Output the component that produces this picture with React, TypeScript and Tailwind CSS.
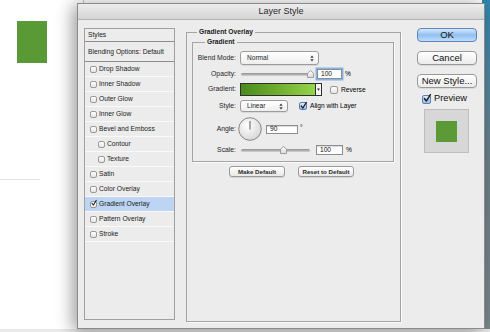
import React from "react"

const EFFECTS = [
  { label: "Drop Shadow" },
  { label: "Inner Shadow" },
  { label: "Outer Glow" },
  { label: "Inner Glow" },
  { label: "Bevel and Emboss" },
  { label: "Contour", sub: true },
  { label: "Texture", sub: true },
  { label: "Satin" },
  { label: "Color Overlay" },
  { label: "Gradient Overlay", on: true },
  { label: "Pattern Overlay" },
  { label: "Stroke" },
]

const CheckBox = ({
  on = false,
  blue = false,
  className = "w-[7px] h-[7px]",
}: {
  on?: boolean
  blue?: boolean
  className?: string
}) => (
  <span
    className={`relative block shrink-0 rounded-[2px] border ${
      blue
        ? "border-[#5b7fae] bg-gradient-to-b from-[#dce9fa] to-[#98bfec]"
        : "border-[#9a9a9a] bg-gradient-to-b from-white to-[#e4e4e4]"
    } ${className}`}
  >
    {on && (
      <svg
        viewBox="0 0 10 10"
        className="absolute -top-[25%] left-[5%] h-[120%] w-[120%] overflow-visible"
      >
        <path
          d="M1.6 5.4 L4 8.4 L8.8 0.6"
          fill="none"
          stroke="#1c1c1c"
          strokeWidth="1.7"
          strokeLinecap="round"
          strokeLinejoin="round"
        />
      </svg>
    )}
  </span>
)

const UpDown = () => (
  <svg width="4" height="7" viewBox="0 0 4 7" className="shrink-0">
    <path d="M0.3 2.8 L2 0.6 L3.7 2.8Z M0.3 4.2 L2 6.4 L3.7 4.2Z" fill="#3a3a3a" />
  </svg>
)

const Select = ({ value, className }: { value: string; className: string }) => (
  <div
    className={`flex h-full items-center justify-between rounded-[3px] border border-[#9c9c9c] bg-gradient-to-b from-white to-[#efefef] pl-[6px] pr-[4px] text-[6.6px] text-[#1d1d1d] shadow-[0_1px_0_rgba(0,0,0,0.08)] ${className}`}
  >
    <span>{value}</span>
    <UpDown />
  </div>
)

const Thumb = () => (
  <svg width="7" height="8" viewBox="0 0 7 8">
    <defs>
      <linearGradient id="th" x1="0" y1="0" x2="0" y2="1">
        <stop offset="0" stopColor="#ffffff" />
        <stop offset="1" stopColor="#d9d9d9" />
      </linearGradient>
    </defs>
    <path d="M0.5 3.2 L3.5 0.5 L6.5 3.2 V7.5 H0.5 Z" fill="url(#th)" stroke="#8a8a8a" strokeWidth="0.8" />
  </svg>
)

const Field = ({ value, className, focus = false }: { value: string; className: string; focus?: boolean }) => (
  <div
    className={`flex items-center border border-[#8d8d8d] bg-white pl-[3px] text-[6.6px] text-[#111] ${
      focus ? "shadow-[0_0_0_1.5px_#86b4ea]" : "shadow-[inset_0_1px_1px_rgba(0,0,0,0.15)]"
    } ${className}`}
  >
    {value}
  </div>
)

const Label = ({ children }: { children: React.ReactNode }) => (
  <span className="w-[44px] shrink-0 pr-[1px] text-right text-[6.8px] text-[#1e1e1e]">{children}</span>
)

const StylesList = () => (
  <div className="flex h-[292px] w-[91px] shrink-0 flex-col border border-[#a0a0a0] text-[6.7px] text-[#1b1b1b]">
    <div className="flex h-[13px] items-center border-b border-[#8e8e8e] pl-[3px]">Styles</div>
    <div className="flex h-[20px] items-center border-b border-[#8e8e8e] pl-[3px] pt-[2px]">
      Blending Options: Default
    </div>
    {EFFECTS.map((fx) => (
      <div
        key={fx.label}
        className={`flex h-[15px] items-center gap-[2px] border-b border-[#f9f9f9] ${
          fx.sub ? "pl-[13px]" : "pl-[5px]"
        } ${fx.on ? "bg-[#bdd5f3]" : ""}`}
      >
        <CheckBox on={fx.on} />
        <span>{fx.label}</span>
      </div>
    ))}
  </div>
)

const GradientOverlay = () => (
  <fieldset className="ml-[11px] h-[294px] w-[215px] shrink-0 border border-[#a4a4a4] shadow-[1px_1px_0_#fbfbfb]">
    <legend className="ml-[10px] px-[2px] text-[6.7px] font-bold leading-[8px] text-[#1a1a1a]">
      Gradient Overlay
    </legend>
    <fieldset className="ml-[5px] mt-[2px] h-[124px] w-[202px] border border-[#a4a4a4] shadow-[1px_1px_0_#fbfbfb]">
      <legend className="ml-[12px] px-[2px] text-[6.7px] font-bold leading-[8px] text-[#1a1a1a]">
        Gradient
      </legend>
      <div className="flex flex-col pt-[5px]">
        <div className="flex h-[14px] items-center">
          <Label>Blend Mode:</Label>
          <Select value="Normal" className="ml-[3px] w-[79px]" />
        </div>

        <div className="mt-[4px] flex h-[10px] items-center">
          <Label>Opacity:</Label>
          <div className="relative ml-[4px] flex h-full w-[71px] items-center">
            <div className="h-[3px] w-full rounded-full bg-gradient-to-b from-[#8f8f8f] to-[#d2d2d2]" />
            <div className="absolute left-[66px] top-[1px]">
              <Thumb />
            </div>
          </div>
          <Field value="100" focus className="ml-[5px] h-[10px] w-[25px]" />
          <span className="ml-[3px] text-[6.6px]">%</span>
        </div>

        <div className="mt-[4px] flex h-[13px] items-center">
          <Label>Gradient:</Label>
          <div className="ml-[3px] flex h-full w-[82px] border border-[#2f2f2f]">
            <div className="h-full flex-1 bg-gradient-to-r from-[#4a8a1e] via-[#6fae30] to-[#95d54a]" />
            <div className="flex h-full w-[6px] items-center justify-center border-l border-[#2f2f2f] bg-[#f3f3f3]">
              <svg width="3" height="3" viewBox="0 0 4 3">
                <path d="M0 0 H4 L2 3Z" fill="#333" />
              </svg>
            </div>
          </div>
          <CheckBox className="ml-[8px] h-[8px] w-[8px]" />
          <span className="ml-[3px] text-[6.6px]">Reverse</span>
        </div>

        <div className="mt-[4px] flex h-[12px] items-center">
          <Label>Style:</Label>
          <Select value="Linear" className="ml-[3px] w-[48px]" />
          <CheckBox on blue className="ml-[11px] h-[8px] w-[8px]" />
          <span className="ml-[3px] text-[6.6px]">Align with Layer</span>
        </div>

        <div className="mt-[5px] flex h-[24px] items-center">
          <Label>Angle:</Label>
          <svg width="24" height="24" viewBox="0 0 24 24" className="ml-[1px] shrink-0">
            <defs>
              <radialGradient id="dial" cx="40%" cy="35%" r="75%">
                <stop offset="0" stopColor="#ffffff" />
                <stop offset="1" stopColor="#d2d2d2" />
              </radialGradient>
            </defs>
            <circle cx="12" cy="12" r="11.3" fill="url(#dial)" stroke="#7a7a7a" strokeWidth="0.9" />
            <line x1="12" y1="12.5" x2="12" y2="4" stroke="#5a5a5a" strokeWidth="1" />
          </svg>
          <Field value="90" className="ml-[4px] h-[9px] w-[32px]" />
          <span className="ml-[2px] self-start pt-[6px] text-[6.6px]">°</span>
        </div>

        <div className="mt-[4px] flex h-[10px] items-center">
          <Label>Scale:</Label>
          <div className="relative ml-[4px] flex h-full w-[69px] items-center">
            <div className="h-[3px] w-full rounded-full bg-gradient-to-b from-[#8f8f8f] to-[#d2d2d2]" />
            <div className="absolute left-[39px] top-[1px]">
              <Thumb />
            </div>
          </div>
          <Field value="100" className="ml-[6px] h-[10px] w-[27px]" />
          <span className="ml-[3px] text-[6.6px]">%</span>
        </div>
      </div>
    </fieldset>

    <div className="mt-[4px] flex gap-[13px] pl-[42px]">
      {["Make Default", "Reset to Default"].map((b) => (
        <div
          key={b}
          className="flex h-[11px] w-[56px] items-center justify-center rounded-[3px] border border-[#9a9a9a] bg-gradient-to-b from-white to-[#e9e9e9] text-[6.2px] font-bold text-[#2a2a2a] shadow-[0_1px_0_rgba(0,0,0,0.1)]"
        >
          {b}
        </div>
      ))}
    </div>
  </fieldset>
)

const SideButtons = () => (
  <div className="ml-[16px] flex w-[60px] shrink-0 flex-col">
    <div className="flex h-[14px] items-center justify-center rounded-[4px] border border-[#5a86c2] bg-gradient-to-b from-[#d8e9fc] via-[#92c0f1] to-[#c2dcf8] text-[9.5px] text-[#111]">
      OK
    </div>
    {["Cancel", "New Style..."].map((b) => (
      <div
        key={b}
        className="mt-[9px] flex h-[14px] items-center justify-center rounded-[4px] border border-[#999] bg-gradient-to-b from-white to-[#ebebeb] text-[9.5px] text-[#111] shadow-[0_1px_0_rgba(0,0,0,0.08)]"
      >
        {b}
      </div>
    ))}
    <div className="mt-[5px] flex h-[12px] items-center pl-[5px]">
      <CheckBox on blue className="h-[9px] w-[9px]" />
      <span className="ml-[3px] text-[9.3px] text-[#111]">Preview</span>
    </div>
    <div className="ml-[7px] mt-[4px] flex h-[44px] w-[45px] items-center justify-center border border-[#bdbdbd] bg-[#d7d7d7]">
      <div className="h-[21px] w-[21px] bg-[#5b9a36]" />
    </div>
  </div>
)

export default function App() {
  return (
    <div className="relative h-[332px] w-[490px] overflow-hidden bg-white font-['Liberation_Sans',Arial,sans-serif]">
      {/* desktop behind the dialog */}
      <div className="absolute left-[17px] top-[21px] h-[42px] w-[30px] bg-[#5a9a36]" />
      <div className="absolute left-0 top-[179px] h-px w-[40px] bg-[#e3e3e3]" />
      <div className="absolute left-[83px] top-0 h-[4px] w-px bg-[#a9cbe0]" />
      <div className="absolute right-0 top-0 h-full w-[8px] bg-gradient-to-b from-[#2c87b0] via-[#6d8089] to-[#7b878b]" />
      <div className="absolute bottom-0 left-0 h-[3px] w-full bg-[#e9e9e9]" />

      {/* Layer Style dialog */}
      <div className="absolute left-[77px] top-[3px] flex h-[326px] w-[408px] flex-col border border-[#8a8a8a] shadow-[-4px_2px_16px_rgba(0,0,0,0.4)]">
        <div className="flex h-[16px] shrink-0 items-center justify-center border-b border-[#b3b3b3] bg-gradient-to-b from-[#ededed] to-[#d4d4d4] text-[9px] text-[#2a2a2a]">
          Layer Style
        </div>
        <div className="flex flex-1 items-start bg-[#ececec] pl-[6px] pt-[8px]">
          <StylesList />
          <GradientOverlay />
          <SideButtons />
        </div>
      </div>
    </div>
  )
}
